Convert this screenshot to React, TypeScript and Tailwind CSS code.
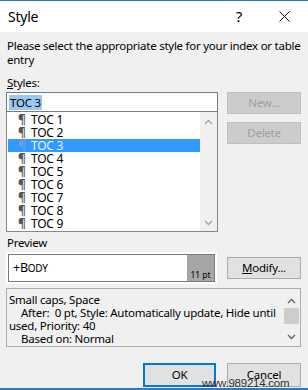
const font = { fontFamily: '"Noto Sans", "Open Sans", sans-serif' };

const ChevronUp = ({ color = '#a3a3a3' }: { color?: string }) => (
  <svg width="9" height="6" viewBox="0 0 9 6">
    <path d="M1 5 L4.5 1.5 L8 5" fill="none" stroke={color} strokeWidth="1.3" />
  </svg>
);

const ChevronDown = ({ color = '#a3a3a3' }: { color?: string }) => (
  <svg width="9" height="6" viewBox="0 0 9 6">
    <path d="M1 1 L4.5 4.5 L8 1" fill="none" stroke={color} strokeWidth="1.3" />
  </svg>
);

const items = ['TOC 1', 'TOC 2', 'TOC 3', 'TOC 4', 'TOC 5', 'TOC 6', 'TOC 7', 'TOC 8', 'TOC 9'];

const App = () => {
  return (
    <div
      className="relative w-[308px] h-[390px] bg-[#f0f0f0] border-t border-[#2b79c7] flex flex-col text-[11.5px] tracking-[-0.25px] text-black overflow-hidden"
      style={font}
    >
      {/* title bar */}
      <div className="h-[31px] bg-white flex items-center pl-[8px] shrink-0">
        <span className="text-[14px]">Style</span>
        <span className="ml-auto text-[15px] mr-[37px]">?</span>
        <svg width="11" height="11" viewBox="0 0 11 11" className="mr-[18px]">
          <path d="M0.5 0.5 L10.5 10.5 M10.5 0.5 L0.5 10.5" stroke="#111" strokeWidth="1" />
        </svg>
      </div>

      <div className="flex flex-col px-[6px]">
        <p className="mt-[7px] leading-[14px] pl-[1px] whitespace-nowrap">
          Please select the appropriate style for your index or table
          <br />
          entry
        </p>
        <div className="mt-[9px] leading-[14px] pl-[1px]">
          <span className="underline">S</span>tyles:
        </div>

        <div className="flex mt-[2px]">
          <div className="w-[212px] flex flex-col">
            <div className="h-[20px] border border-[#7a7a7a] bg-white flex items-center pl-[2px]">
              <span className="bg-[#99c9ef] leading-[15px] px-[1px]">TOC 3</span>
            </div>
            <div className="h-[120px] border border-t-0 border-[#828790] bg-white flex">
              <div className="flex-1 pt-[1px] pl-[1px]">
                {items.map((t, i) => (
                  <div
                    key={t}
                    className={
                      'h-[13px] flex items-center leading-[13px] ' +
                      (i === 2 ? 'bg-[#3399ff] text-[#e8f3ff]' : '')
                    }
                  >
                    <span
                      className={
                        'w-[23px] pl-[10px] text-[12px] leading-[13px] font-bold ' +
                        (i === 2 ? 'text-[#6f9fd3]' : 'text-[#555]')
                      }
                    >
                      ¶
                    </span>
                    <span className="text-[12px]">{t}</span>
                  </div>
                ))}
              </div>
              <div className="w-[17px] bg-[#f0f0f0] flex flex-col items-center justify-between pt-[7px] pb-[5px]">
                <ChevronUp />
                <ChevronDown />
              </div>
            </div>
          </div>

          <div className="ml-[9px] w-[74px] flex flex-col gap-[8px]">
            <div className="h-[22px] bg-[#cccccc] border border-[#bfbfbf] flex items-center justify-center text-[#a0a0a0]">
              New...
            </div>
            <div className="h-[22px] bg-[#cccccc] border border-[#bfbfbf] flex items-center justify-center text-[#a0a0a0]">
              Delete
            </div>
          </div>
        </div>

        <div className="mt-[4px] leading-[14px] pl-[1px]">Preview</div>

        <div className="flex mt-[2px] items-center">
          <div className="w-[211px] h-[32px] bg-white p-[2px]">
            <div className="h-full border border-[#7a7a7a] flex">
              <div className="flex-1 flex items-center pl-[4px]">
                <span className="text-[12.5px]">
                  +B<span className="text-[10px]">ODY</span>
                </span>
              </div>
              <div className="w-[27px] bg-[#a6a6a6] flex items-end justify-center pb-[1px]">
                <span className="text-[8.5px] leading-[10px] tracking-normal">11 pt</span>
              </div>
            </div>
          </div>
          <div className="ml-[10px] w-[74px] h-[22px] bg-[#e1e1e1] border border-[#adadad] flex items-center justify-center">
            <span>
              <span className="underline">M</span>odify...
            </span>
          </div>
        </div>

        <div className="mt-[4px] w-[295px] h-[59px] border border-[#adadad] flex">
          <div className="flex-1 pl-[2px] pt-[4px] leading-[13px] whitespace-nowrap">
            <div>Small caps, Space</div>
            <div className="pl-[12px]">After:&nbsp; 0 pt, Style: Automatically update, Hide until</div>
            <div>used, Priority: 40</div>
            <div className="pl-[12px]">Based on: Normal</div>
          </div>
          <div className="w-[17px] flex flex-col items-center pt-[9px] pb-[6px]">
            <ChevronUp color="#606060" />
            <div className="w-[15px] h-[16px] bg-[#cdcdcd] mt-[4px]" />
            <div className="mt-auto">
              <ChevronDown color="#606060" />
            </div>
          </div>
        </div>

        <div className="flex justify-end mt-[16px] gap-[11px] pr-[1px]">
          <div className="w-[73px] h-[24px] bg-[#e1e1e1] border-2 border-[#0078d7] flex items-center justify-center">
            OK
          </div>
          <div className="w-[74px] h-[24px] bg-[#e1e1e1] border border-[#adadad] flex items-center justify-center">
            Cancel
          </div>
        </div>
      </div>

      <div
        className="absolute left-[202px] top-[375px] text-[11.5px] leading-[14px] text-[#333]"
        style={{ fontFamily: '"Liberation Sans", sans-serif' }}
      >
        www.989214.com
      </div>
      <div className="absolute left-0 bottom-0 w-full h-[2px] bg-[#2b79c7]" />
    </div>
  );
};

export default App;
